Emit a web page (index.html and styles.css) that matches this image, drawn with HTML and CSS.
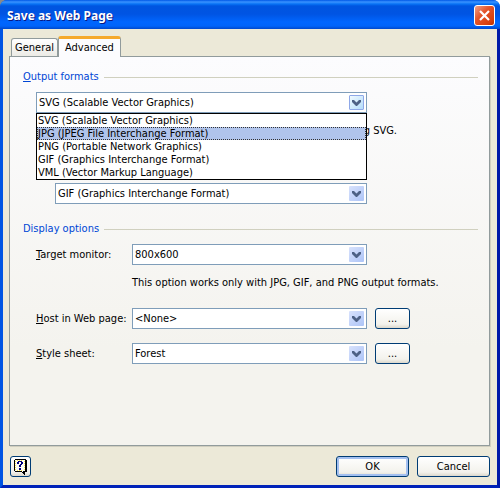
FILE: index.html
```html
<!DOCTYPE html>
<html lang="en">
<head>
<meta charset="utf-8">
<title>Save as Web Page</title>
<link rel="stylesheet" href="styles.css">
</head>
<body>
<main class="window">
  <header class="titlebar">
    <h1>Save as Web Page</h1>
    <button class="close" type="button" aria-label="Close">
      <svg viewBox="0 0 11 11" width="11" height="11"><path d="M1 1L10 10M10 1L1 10" stroke="#fff" stroke-width="2.2" fill="none"/></svg>
    </button>
  </header>

  <div class="client">
    <div class="tabs" role="tablist">
      <button class="tab" type="button" role="tab" aria-selected="false">General</button>
      <button class="tab tab-active" type="button" role="tab" aria-selected="true">Advanced</button>
    </div>

    <div class="panel" role="tabpanel">
      <section>
        <h2 class="heading"><span><u>O</u>utput formats</span></h2>
        <div class="formats">
          <div class="combo combo-open">
            <select aria-label="Output formats"><option>SVG (Scalable Vector Graphics)</option></select>
            <span class="arrow"><svg viewBox="0 0 9 6" width="9" height="6"><path d="M0 0h2L4.500 2.500L7 0h2v2L5 6H4L0 2z" fill="#4d6185"/></svg></span>
            <ul class="list" role="listbox" aria-label="Formats">
              <li role="option">SVG (Scalable Vector Graphics)</li>
              <li role="option" class="selected" aria-selected="true">JPG (JPEG File Interchange Format)</li>
              <li role="option">PNG (Portable Network Graphics)</li>
              <li role="option">GIF (Graphics Interchange Format)</li>
              <li role="option">VML (Vector Markup Language)</li>
            </ul>
          </div>
          <p class="alternate-label">g SVG.</p>
          <div class="combo alternate">
            <select aria-label="Alternate format"><option>GIF (Graphics Interchange Format)</option></select>
            <span class="arrow"><svg viewBox="0 0 9 6" width="9" height="6"><path d="M0 0h2L4.500 2.500L7 0h2v2L5 6H4L0 2z" fill="#4d6185"/></svg></span>
          </div>
        </div>
      </section>

      <section class="display">
        <h2 class="heading"><span>Display options</span></h2>
        <div class="row">
          <label for="monitor"><u>T</u>arget monitor:</label>
          <div class="combo">
            <select id="monitor"><option>800x600</option></select>
            <span class="arrow"><svg viewBox="0 0 9 6" width="9" height="6"><path d="M0 0h2L4.500 2.500L7 0h2v2L5 6H4L0 2z" fill="#4d6185"/></svg></span>
          </div>
        </div>
        <p class="note">This option works only with JPG, GIF, and PNG output formats.</p>
        <div class="row">
          <label for="host"><u>H</u>ost in Web page:</label>
          <div class="combo">
            <select id="host"><option>&lt;None&gt;</option></select>
            <span class="arrow"><svg viewBox="0 0 9 6" width="9" height="6"><path d="M0 0h2L4.500 2.500L7 0h2v2L5 6H4L0 2z" fill="#4d6185"/></svg></span>
          </div>
          <button class="button" type="button" aria-label="Browse for host page">...</button>
        </div>
        <div class="row">
          <label for="style"><u>S</u>tyle sheet:</label>
          <div class="combo">
            <select id="style"><option>Forest</option></select>
            <span class="arrow"><svg viewBox="0 0 9 6" width="9" height="6"><path d="M0 0h2L4.500 2.500L7 0h2v2L5 6H4L0 2z" fill="#4d6185"/></svg></span>
          </div>
          <button class="button" type="button" aria-label="Browse for style sheet">...</button>
        </div>
      </section>
    </div>

    <footer class="actions">
      <button class="button help" type="button" aria-label="Help">
        <svg viewBox="0 0 14 16" width="14" height="16" shape-rendering="crispEdges">
          <path d="M1 0h11v1h1v12h-2v3h-1v-1H9v-1H8v-1H1v-1H0V1h1z" fill="#000"/>
          <path d="M1 1h10v11H9v2L8 12H1z" fill="#fffff4"/>
          <path d="M1 2h1v1H1zM1 4h1v1H1zM1 6h1v1H1zM1 8h1v1H1zM1 10h1v1H1zM3 1h1v1H3zM5 1h1v1H5zM7 1h1v1H7zM10 2h1v1h-1zM10 4h1v1h-1zM10 6h1v1h-1zM10 8h1v1h-1zM10 10h1v1h-1zM3 11h1v1H3zM5 11h1v1H5zM7 11h1v1H7z" fill="#ffe94a"/>
          <path d="M4 2h4v1h1v2H8v1H7v2H5V6h1V5h1V3H5v2H3V3h1zM5 9h2v2H5z" fill="#00007b"/>
        </svg>
      </button>
      <button class="button wide default" type="button">OK</button>
      <button class="button wide" type="button">Cancel</button>
    </footer>
  </div>
</main>
</body>
</html>
```

FILE: styles.css
```css
* {
  box-sizing: border-box;
}

body {
  margin: 0;
  background: linear-gradient(90deg, #8a8a8a 50%, #fff 50%);
  color: #000;
  font: 11px/16px "DejaVu Sans Condensed", Tahoma, sans-serif;
}

h1, h2, p, ul {
  margin: 0;
  padding: 0;
}

button, select {
  color: inherit;
  font: inherit;
}

.window {
  display: flex;
  flex-direction: column;
  min-height: 100vh;
  border-radius: 7px 7px 0 0;
  background: #0054e3;
  overflow: hidden;
}

.titlebar {
  display: flex;
  align-items: center;
  justify-content: space-between;
  height: 29px;
  padding: 2px 5px 0 7px;
  background: linear-gradient(#0058e6 0, #3a93ff 2px, #0873f5 4px, #0055e0 6px, #0054e3 14px, #0066ff 22px, #0064fa 26px, #0048cc 29px);
}

.titlebar h1 {
  color: #fff;
  font: bold 12px/20px "Noto Sans", sans-serif;
  text-shadow: 1px 1px #0a1883;
}

.close {
  display: flex;
  align-items: center;
  justify-content: center;
  width: 21px;
  height: 21px;
  padding: 0;
  border: 1px solid #fff;
  border-radius: 3px;
  background: linear-gradient(135deg, #f0a088, #e4552c 40%, #d8400e 80%, #b83000);
}

.client {
  display: flex;
  flex: 1;
  flex-direction: column;
  padding: 7px 7px 8px 6px;
  border: solid;
  border-width: 0 3px 3px;
  border-color: #0054e3 #0019a8 #0022b8 #0054e3;
  background: #ece9d8;
}

.tabs {
  display: flex;
  align-items: flex-end;
  padding-left: 2px;
}

.tab {
  height: 18px;
  padding: 0 3px;
  border: 1px solid #919b9c;
  border-bottom: 0;
  border-radius: 3px 3px 0 0;
  background: linear-gradient(#fff, #ecebe6);
  line-height: 17px;
}

.tab-active {
  z-index: 1;
  height: 21px;
  margin-bottom: -1px;
  padding: 0 6px;
  border-top: 3px solid #f5a92c;
  background: #fcfcfe;
  line-height: 14px;
}

.panel {
  flex: 1;
  padding: 12px 11px 12px 13px;
  border: 1px solid #919b9c;
  background: linear-gradient(#fcfcfe, #f4f3ee 75%);
  box-shadow: 1px 1px #d0cebf;
}

.heading {
  display: flex;
  align-items: center;
  gap: 5px;
  margin-bottom: 7px;
  color: #0046d5;
  font: inherit;
}

.heading::after {
  flex: 1;
  height: 1px;
  background: #d0d0bf;
  content: "";
}

.formats {
  max-width: 344px;
  padding-left: 13px;
}

.combo {
  position: relative;
  height: 21px;
}

.combo-open {
  z-index: 2;
}

.combo select {
  display: block;
  width: 100%;
  height: 100%;
  padding: 0 20px 0 2px;
  border: 1px solid #7f9db9;
  border-radius: 0;
  background: #fff;
  appearance: none;
}

.arrow {
  position: absolute;
  top: 3px;
  right: 3px;
  display: flex;
  align-items: center;
  justify-content: center;
  width: 15px;
  height: 15px;
  border-radius: 1px;
  background: linear-gradient(135deg, #d8e2fc, #adc4f7);
  pointer-events: none;
}

.combo-open .arrow {
  border: 1px solid #8fa8e8;
  background: linear-gradient(135deg, #f0faff, #b4dcfa);
}

.list {
  position: absolute;
  top: 100%;
  right: 0;
  left: 0;
  border: 1px solid #000;
  background: #fff;
  line-height: 13px;
  list-style: none;
}

.list li {
  height: 13px;
  padding: 0 1px;
}

.list .selected {
  padding: 0;
  border: 1px dotted #333;
  background: #b0c4ec;
  line-height: 11px;
}

.alternate-label {
  margin: 10px -30px 44px 0;
  text-align: right;
}

.alternate {
  margin-left: 19px;
}

.display {
  margin-top: 17px;
}

.row {
  display: grid;
  grid-template-columns: 96px minmax(0, 235px) 35px;
  align-items: center;
  padding-left: 13px;
}

.row + .row {
  margin-top: 14px;
}

.row .button {
  margin-left: 8px;
  width: 35px;
}

.note {
  margin: 10px 0 17px 109px;
}

.button {
  display: flex;
  align-items: center;
  justify-content: center;
  height: 21px;
  padding: 0;
  border: 1px solid #003c74;
  border-radius: 3px;
  background: linear-gradient(#fff, #f3f2ec 80%, #dcd8cc);
}

.wide {
  width: 73px;
}

.default {
  box-shadow: inset 0 0 0 2px #a4c0f0;
}

.actions {
  display: flex;
  gap: 8px;
  margin-top: 10px;
  padding-left: 1px;
}

.help {
  width: 21px;
  margin-right: auto;
}
```
